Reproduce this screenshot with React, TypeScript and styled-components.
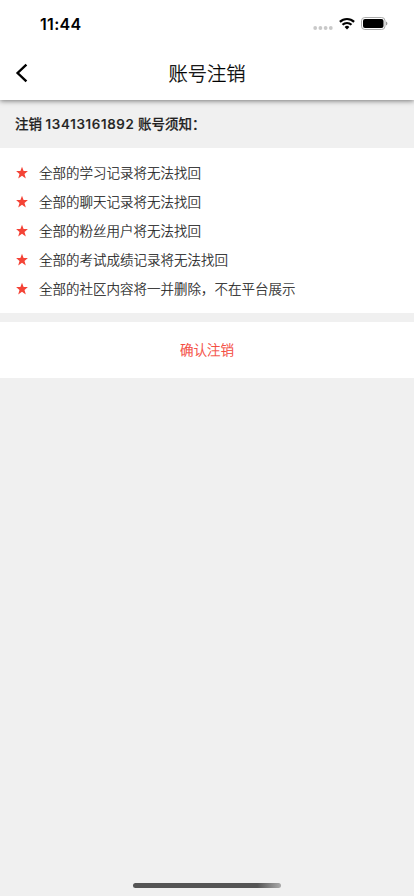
import React from "react";
import styled, { createGlobalStyle } from "styled-components";

const GlobalStyle = createGlobalStyle`
  * { box-sizing: border-box; }
  body { margin: 0; background: #f0f0f0; }
`;

const Screen = styled.div`
  width: 100%;
  height: 896px;
  display: flex;
  flex-direction: column;
  overflow: hidden;
  background: #f0f0f0;
  color: #222;
  font-family: Inter, "Noto Sans CJK SC", sans-serif;
`;

const Header = styled.header`
  flex: none;
  height: 100px;
  background: #fff;
  box-shadow: 0 1px 5px rgba(0, 0, 0, 0.5);
`;

const StatusBar = styled.div`
  height: 46px;
  padding: 1px 26px 0 40px;
  display: flex;
  align-items: center;
  justify-content: space-between;
`;

const Clock = styled.span`
  font-size: 16px;
  font-weight: 600;
  line-height: 20px;
  letter-spacing: 0.3px;
  color: #000;
`;

const StatusIcons = styled.div`
  display: flex;
  align-items: center;
  gap: 6px;
  svg { display: block; }
`;

const NavBar = styled.div`
  height: 54px;
  padding: 0 15px;
  display: grid;
  grid-template-columns: 24px 1fr 24px;
  align-items: center;
`;

const BackButton = styled.button`
  padding: 0;
  border: 0;
  background: none;
  svg { display: block; }
`;

const Title = styled.h1`
  margin: 0;
  padding-top: 1px;
  text-align: center;
  font-size: 19.3px;
  line-height: 28px;
  font-weight: 300;
  color: #000;
  -webkit-text-stroke: 0.3px #000;
`;

const Notice = styled.h2`
  flex: none;
  margin: 0;
  height: 48px;
  padding-left: 15px;
  font-size: 13.5px;
  line-height: 48px;
  font-weight: 500;
  color: #222;
  -webkit-text-stroke: 0.2px #222;
`;

const Digits = styled.span`
  letter-spacing: 0.65px;
`;

const List = styled.ul`
  flex: none;
  margin: 0;
  height: 165px;
  padding: 10px 15px;
  list-style: none;
  background: #fff;
`;

const Item = styled.li`
  height: 29px;
  display: flex;
  align-items: center;
  gap: 10px;
  font-size: 13.5px;
  font-weight: 300;
  line-height: 27px;
  white-space: nowrap;
  svg { display: block; }
`;

const ItemText = styled.span`
  padding-top: 2px;
  -webkit-text-stroke: 0.2px #222;
`;

const ConfirmButton = styled.button`
  flex: none;
  height: 56px;
  margin-top: 9px;
  padding: 0 0 2px;
  border: 0;
  background: #fff;
  color: #f44336;
  font-family: inherit;
  font-size: 13.5px;
  font-weight: 300;
  -webkit-text-stroke: 0.25px #f44336;
`;

const HomeIndicator = styled.div`
  width: 148px;
  height: 5px;
  margin: auto auto 8px;
  border-radius: 3px;
  background: linear-gradient(90deg, #555 0 84%, #aaa 100%);
`;

const Cellular = () => (
  <svg width="20" height="14" viewBox="0 0 20 14" fill="#c9c9c9">
    {[2.2, 7.4, 12.6, 17.8].map((x) => (
      <circle key={x} cx={x} cy="11" r="1.9" />
    ))}
  </svg>
);

const Wifi = () => (
  <svg width="16" height="13" viewBox="0 0 16 13" fill="none" stroke="#000" strokeWidth="2.2">
    <path d="M.9 4.9a10.2 10.2 0 0 1 14.2 0" />
    <path d="M3.5 7.8a6.5 6.5 0 0 1 9 0" />
    <path d="M5.6 10a3.5 3.5 0 0 1 4.8 0L8 12.4Z" fill="#000" stroke="none" />
  </svg>
);

const Battery = () => (
  <svg width="27" height="13" viewBox="0 0 27 13">
    <rect x=".5" y=".5" width="23.5" height="12" rx="3.3" fill="#fff" stroke="#aaa" />
    <rect x="2" y="2" width="20.5" height="9" rx="2" />
    <path d="M25 4.5c1.9.6 1.9 3.4 0 4Z" fill="#999" />
  </svg>
);

const Back = () => (
  <svg width="14" height="20" viewBox="0 0 14 20" fill="none" stroke="#000" strokeWidth="2.4">
    <path d="M11.4 1.6 2.6 10l8.8 8.4" />
  </svg>
);

const Star = () => (
  <svg width="14" height="14" viewBox="0 0 14 14" fill="#f44336">
    <path d="m7 .8 1.6 4.2h4.3L9.5 7.9l1.3 4.6L7 9.8l-3.8 2.7 1.3-4.6L1.1 5h4.3Z" />
  </svg>
);

const consequences = [
  "全部的学习记录将无法找回",
  "全部的聊天记录将无法找回",
  "全部的粉丝用户将无法找回",
  "全部的考试成绩记录将无法找回",
  "全部的社区内容将一并删除，不在平台展示",
];

export default function App() {
  return (
    <Screen lang="zh-CN">
      <GlobalStyle />
      <Header>
        <StatusBar>
          <Clock>11:44</Clock>
          <StatusIcons>
            <Cellular />
            <Wifi />
            <Battery />
          </StatusIcons>
        </StatusBar>
        <NavBar>
          <BackButton aria-label="返回">
            <Back />
          </BackButton>
          <Title>账号注销</Title>
        </NavBar>
      </Header>
      <Notice>
        注销 <Digits>13413161892</Digits> 账号须知：
      </Notice>
      <List>
        {consequences.map((text) => (
          <Item key={text}>
            <Star />
            <ItemText>{text}</ItemText>
          </Item>
        ))}
      </List>
      <ConfirmButton>确认注销</ConfirmButton>
      <HomeIndicator />
    </Screen>
  );
}
